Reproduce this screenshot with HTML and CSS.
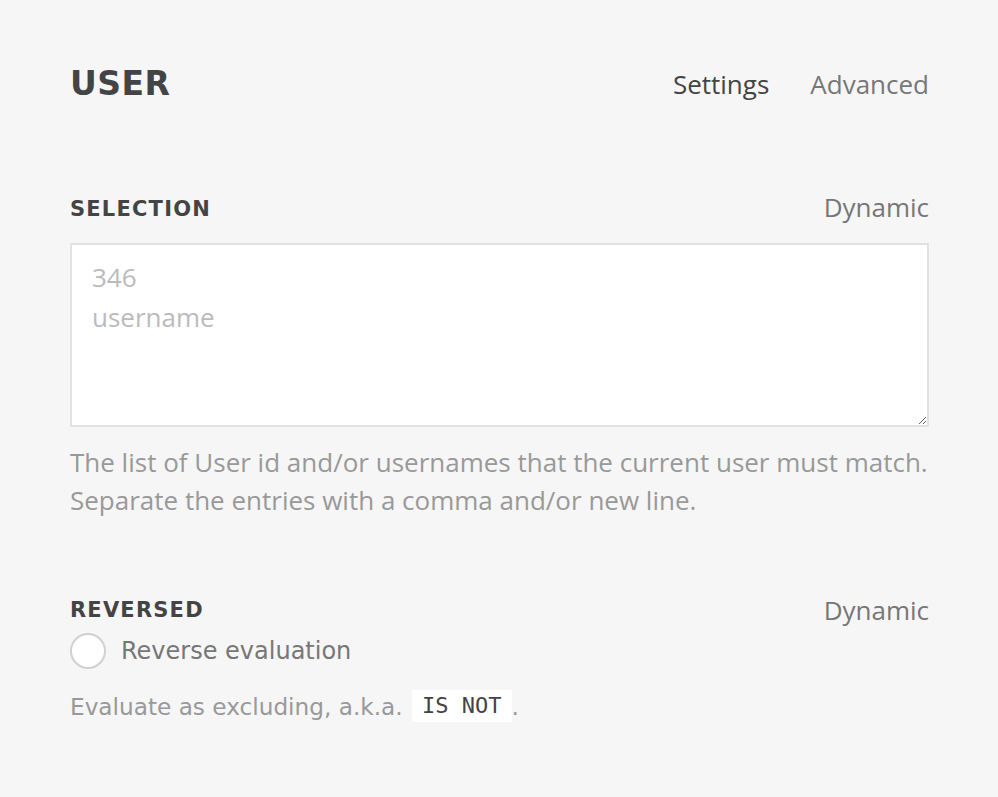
FILE: index.html
```html
<!DOCTYPE html>
<html>
<head>
<meta charset="utf-8">
<link rel="stylesheet" href="styles.css">
</head>
<body>
<div class="page">
  <header class="top">
    <h1 class="title">USER</h1>
    <nav class="tabs">
      <span class="tab active">Settings</span>
      <span class="tab">Advanced</span>
    </nav>
  </header>

  <section class="field selection">
    <div class="field-head">
      <h2 class="label">SELECTION</h2>
      <span class="dynamic">Dynamic</span>
    </div>
    <textarea class="input" placeholder="346&#10;username"></textarea>
    <p class="help">The list of User id and/or usernames that the current user must match. Separate the entries with a comma and/or new line.</p>
  </section>

  <section class="field reversed">
    <div class="field-head">
      <h2 class="label">REVERSED</h2>
      <span class="dynamic">Dynamic</span>
    </div>
    <label class="check">
      <span class="radio"></span>
      <span class="check-text">Reverse evaluation</span>
    </label>
    <p class="help2">Evaluate as excluding, a.k.a. <code class="code">IS NOT</code>.</p>
  </section>
</div>
</body>
</html>
```
FILE: styles.css
```css
html, body {
  margin: 0;
  padding: 0;
  background: #f6f6f6;
}
.page {
  width: 859px;
  padding: 0 69px 0 70px;
  font-family: "Open Sans", sans-serif;
}
.top {
  display: flex;
  justify-content: space-between;
  align-items: center;
  height: 167px;
}
.title {
  margin: 0;
  font-family: "DejaVu Sans", sans-serif;
  font-weight: bold;
  font-size: 33px;
  color: #444;
  letter-spacing: 0.5px;
}
.tabs {
  display: flex;
  gap: 41px;
}
.tab {
  font-size: 26px;
  color: #777;
}
.tab.active {
  color: #444;
}
.field-head {
  display: flex;
  justify-content: space-between;
  align-items: center;
}
.label {
  margin: 0;
  font-family: "DejaVu Sans", sans-serif;
  font-weight: bold;
  font-size: 21px;
  letter-spacing: 1.2px;
  color: #444;
}
.dynamic {
  font-size: 26px;
  color: #777;
}
.selection .field-head {
  box-sizing: border-box;
  height: 76px;
  padding-top: 4px;
}
.selection .label {
  margin-top: 3px;
}
.input {
  display: block;
  box-sizing: border-box;
  width: 100%;
  height: 184px;
  margin: 0;
  padding: 12px 20px;
  border: 2px solid #e2e2e2;
  background: #fff;
  font-family: "Open Sans", sans-serif;
  font-size: 26px;
  line-height: 40px;
  color: #444;
  resize: vertical;
  outline: none;
}
.input::placeholder {
  color: #bbb;
}
.help {
  margin: 16px 0 0 0;
  font-size: 26px;
  line-height: 38px;
  color: #999;
}
.reversed {
  margin-top: 76px;
}
.reversed .field-head {
  height: 30px;
}
.check {
  display: flex;
  align-items: center;
  gap: 15px;
  margin-top: 8px;
}
.radio {
  box-sizing: border-box;
  width: 36px;
  height: 36px;
  border-radius: 50%;
  border: 2px solid #d0d0d0;
  background: #fff;
}
.check-text {
  font-family: "DejaVu Sans", sans-serif;
  font-size: 24px;
  color: #777;
}
.help2 {
  margin: 19px 0 0 0;
  font-family: "DejaVu Sans", sans-serif;
  font-size: 23.2px;
  line-height: 38px;
  color: #999;
}
.code {
  display: inline-block;
  background: #fff;
  font-family: "DejaVu Sans Mono", monospace;
  font-size: 22px;
  line-height: 32px;
  padding: 0 10px;
  margin-left: 2px;
  color: #444;
  vertical-align: 2px;
}
```
